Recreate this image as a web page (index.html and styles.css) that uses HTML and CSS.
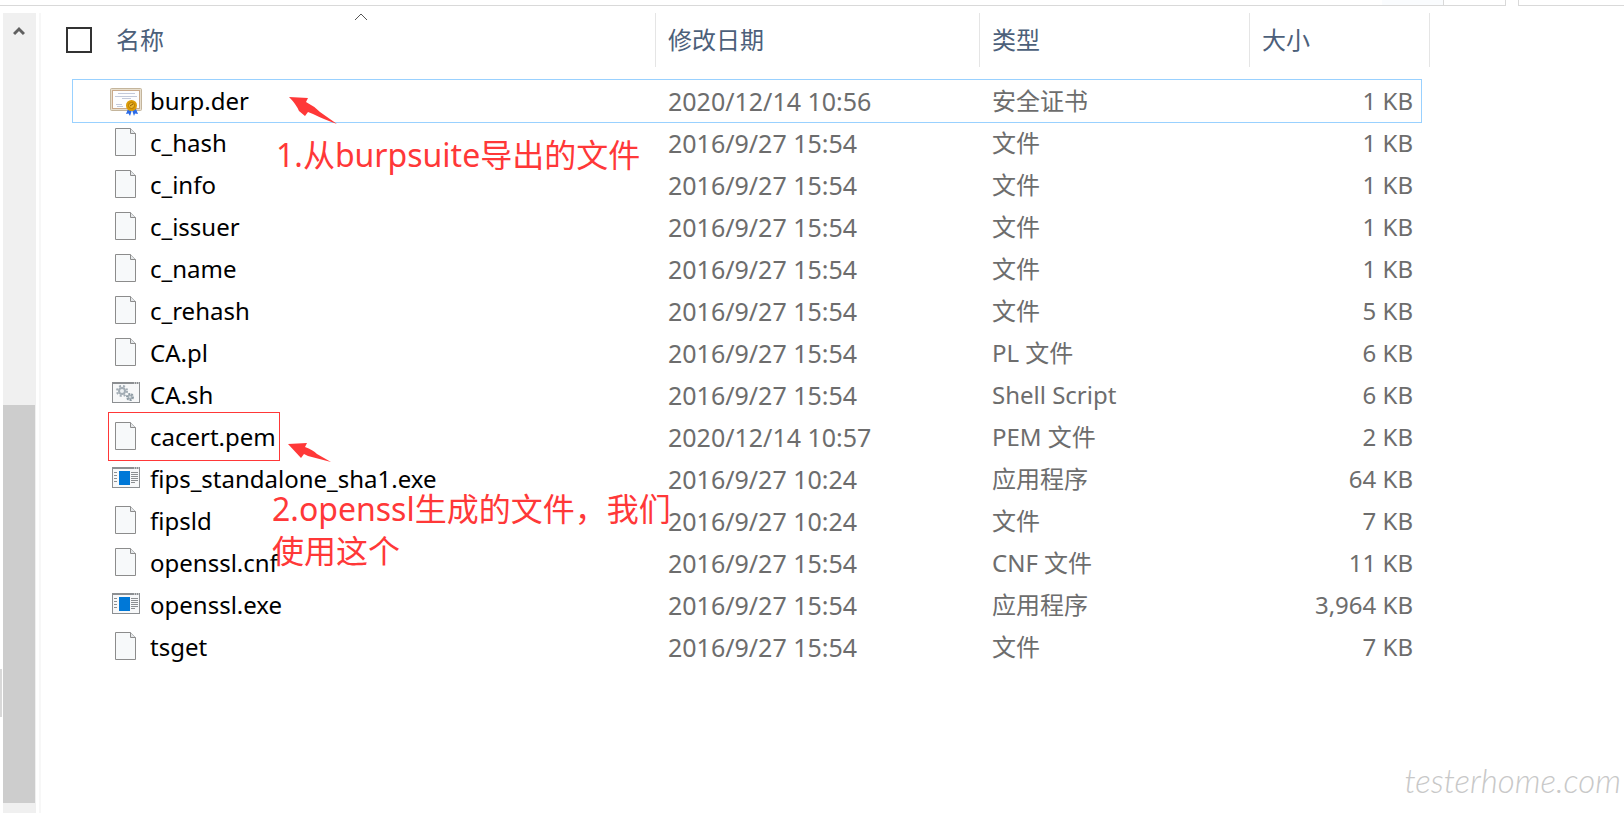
FILE: index.html
```html
<!DOCTYPE html>
<html lang="zh-CN">
    <head>
        <meta charset="utf-8">
        <title>openssl</title>
        <link rel="stylesheet" href="styles.css">
    </head>
    <body>
        <!-- icons shared by the file rows -->
        <svg class="sprite" aria-hidden="true">
            <symbol id="doc" viewBox="0 0 32 30">
                <path d="M5.500 .5h15l5 5v22h-20z" fill="#f7f9fa" stroke="#8c8c8c"/>
                <path d="M20.500 .5v5h5" fill="#e4e7e9" stroke="#8c8c8c"/>
            </symbol>
            <symbol id="cert" viewBox="0 -2 32 30">
                <rect x=".5" y=".5" width="31" height="22" rx="1" fill="#e8dfce" stroke="#c4b59c"/>
                <rect x="2.500" y="2.500" width="27" height="18" fill="#fdfdfe" stroke="#c9a98a"/>
                <path d="M8 5.500h17M5 8.500h22M12 10.500h9M6 16.500h6M7 18.500h6" stroke="#c3c9da"/>
                <path d="M18 21l-2 5 2.500-.5 1.500 2.500 2-6 2 6 1-2.500 3 .5-2-5z" fill="#2a6be8"/>
                <circle cx="21.500" cy="17.500" r="5.500" fill="#dc9c08"/>
                <circle cx="21.500" cy="17.500" r="3" fill="#e9b42c" stroke="#b57a00"/>
                <path d="M20 18l3-2" stroke="#8e5b00"/>
            </symbol>
            <symbol id="script" viewBox="0 2 32 30">
                <rect x="2.500" y="4.500" width="27" height="20" fill="#f7f8f9" stroke="#8c8f92"/>
                <path d="M2 5h28" stroke="#8c8f92" stroke-width="2"/>
                <path d="M24 5h1m1 0h1m1 0h1" stroke="#fff"/>
                <circle cx="12" cy="13" r="5" fill="none" stroke="#a3adb5" stroke-width="2" stroke-dasharray="2 2"/>
                <circle cx="12" cy="13" r="3" fill="#edf0f2" stroke="#a3adb5" stroke-width="2"/>
                <circle cx="20" cy="19" r="3" fill="none" stroke="#8d9aa3" stroke-width="2" stroke-dasharray="2 1"/>
                <circle cx="20" cy="19" r="2" fill="#cfd6da" stroke="#8d9aa3"/>
            </symbol>
            <symbol id="exe" viewBox="0 1 32 30">
                <rect x="2.500" y="4.500" width="27" height="20" fill="#f7f8f9" stroke="#8c8f92"/>
                <path d="M2 5h28" stroke="#8c8f92" stroke-width="2"/>
                <path d="M24 5h1m1 0h1m1 0h1" stroke="#fff"/>
                <path d="M4 9.500h3M4 12.500h3M4 15.500h3M4 18.500h3M21 9.500h7M21 11.500h7M21 13.500h7M21 15.500h7M21 17.500h7M21 19.500h4" stroke="#8c8f92"/>
                <rect x="9" y="8" width="11" height="14" fill="#0078d7"/>
            </symbol>
        </svg>

        <div class="toolbar">
            <div class="address"><span class="dropdown"></span></div>
            <div class="search"></div>
        </div>

        <div class="window">
            <div class="tree">
                <span class="tree-edge"></span>
                <div class="scrollbar">
                    <button class="scroll-up" aria-label="向上滚动"><svg width="12" height="10" viewBox="0 0 12 10"><path d="M1 8l5-5 5 5" fill="none" stroke="#606060" stroke-width="3"/></svg></button>
                    <div class="thumb"></div>
                </div>
            </div>

            <main class="files">
                <table>
                    <colgroup>
                        <col>
                        <col class="col-date">
                        <col class="col-type">
                        <col class="col-size">
                    </colgroup>
                    <thead>
                        <tr>
                            <th><div class="name-head"><input type="checkbox" id="all"><label for="all">名称</label></div><svg class="sort" width="14" height="8" viewBox="0 0 14 8"><path d="M1 7l6-6 6 6" fill="none" stroke="#555"/></svg></th>
                            <th>修改日期</th>
                            <th>类型</th>
                            <th>大小</th>
                        </tr>
                    </thead>
                    <tbody>
                        <tr class="focused"><td><svg class="icon"><use href="#cert"/></svg>burp.der</td><td class="date">2020/12/14 10:56</td><td>安全证书</td><td>1 KB</td></tr>
                        <tr><td><svg class="icon"><use href="#doc"/></svg>c_hash</td><td class="date">2016/9/27 15:54</td><td>文件</td><td>1 KB</td></tr>
                        <tr><td><svg class="icon"><use href="#doc"/></svg>c_info</td><td class="date">2016/9/27 15:54</td><td>文件</td><td>1 KB</td></tr>
                        <tr><td><svg class="icon"><use href="#doc"/></svg>c_issuer</td><td class="date">2016/9/27 15:54</td><td>文件</td><td>1 KB</td></tr>
                        <tr><td><svg class="icon"><use href="#doc"/></svg>c_name</td><td class="date">2016/9/27 15:54</td><td>文件</td><td>1 KB</td></tr>
                        <tr><td><svg class="icon"><use href="#doc"/></svg>c_rehash</td><td class="date">2016/9/27 15:54</td><td>文件</td><td>5 KB</td></tr>
                        <tr><td><svg class="icon"><use href="#doc"/></svg>CA.pl</td><td class="date">2016/9/27 15:54</td><td>PL 文件</td><td>6 KB</td></tr>
                        <tr><td><svg class="icon"><use href="#script"/></svg>CA.sh</td><td class="date">2016/9/27 15:54</td><td>Shell Script</td><td>6 KB</td></tr>
                        <tr><td><svg class="icon"><use href="#doc"/></svg>cacert.pem</td><td class="date">2020/12/14 10:57</td><td>PEM 文件</td><td>2 KB</td></tr>
                        <tr><td><svg class="icon"><use href="#exe"/></svg>fips_standalone_sha1.exe</td><td class="date">2016/9/27 10:24</td><td>应用程序</td><td>64 KB</td></tr>
                        <tr><td><svg class="icon"><use href="#doc"/></svg>fipsld</td><td class="date">2016/9/27 10:24</td><td>文件</td><td>7 KB</td></tr>
                        <tr><td><svg class="icon"><use href="#doc"/></svg>openssl.cnf</td><td class="date">2016/9/27 15:54</td><td>CNF 文件</td><td>11 KB</td></tr>
                        <tr><td><svg class="icon"><use href="#exe"/></svg>openssl.exe</td><td class="date">2016/9/27 15:54</td><td>应用程序</td><td>3,964 KB</td></tr>
                        <tr><td><svg class="icon"><use href="#doc"/></svg>tsget</td><td class="date">2016/9/27 15:54</td><td>文件</td><td>7 KB</td></tr>
                    </tbody>
                </table>

                <!-- notes drawn over the list -->
                <svg class="arrow arrow-one" width="50" height="28" viewBox="0 0 50 28"><path d="M0 0l19 1-2 4q8 4 14 10l17 12q-14-5-24-10l-5-2-3 4-6-5q-3-7-10-14z" fill="#ff3838"/></svg>
                <p class="note note-one">1.从burpsuite导出的文件</p>
                <div class="mark"></div>
                <svg class="arrow arrow-two" width="44" height="20" viewBox="0 0 44 20"><path d="M0 1l19-1-2 4q8 3 12 7l14 8-23-6-4-2-3 4z" fill="#ff3838"/></svg>
                <p class="note note-two">2.openssl生成的文件，我们<br>使用这个</p>
            </main>
        </div>
        <div class="watermark">testerhome.com</div>
    </body>
</html>
```
FILE: styles.css
```css
* {
    box-sizing: border-box;
}
body {
    margin: 0;
    min-height: 100vh;
    display: flex;
    flex-direction: column;
    background: white;
    color: #6d6d6d;
    font-family: "Noto Sans", "Noto Sans CJK SC", sans-serif;
    font-size: 24px;
    line-height: 42px;
}
.sprite {
    position: absolute;
    width: 0;
    height: 0;
}
.toolbar {
    display: flex;
    gap: 12px;
    height: 6px;
}
.address {
    flex: 1;
    display: flex;
    justify-content: flex-end;
    padding-right: 61px;
    border: 1px solid #d9d9d9;
    border-width: 0 1px 1px 0;
}
.dropdown {
    width: 62px;
    background: #fafcfe;
    border-right: 1px solid #d9d9d9;
}
.search {
    width: 106px;
    border: 1px solid #d9d9d9;
    border-width: 0 0 1px 1px;
}
.window {
    flex: 1;
    display: flex;
    padding-top: 7px;
}
.tree {
    display: flex;
    gap: 1px;
    width: 41px;
    border-right: 2px solid #f7f7f7;
}
.tree-edge {
    width: 2px;
    height: 48px;
    margin-top: 656px;
    background: #d9d9d9;
}
.scrollbar {
    display: grid;
    grid-template-rows: 392fr 398fr 10fr;
    width: 33px;
    padding-right: 1px;
    background: #f0f0f0;
}
.scroll-up {
    align-self: start;
    height: 36px;
    padding: 0;
    border: 0;
    background: none;
    line-height: 0;
}
.thumb {
    background: #cdcdcd;
}
.files {
    position: relative;
    flex: 1;
    padding: 0 194px 0 25px;
}
table {
    width: 100%;
    table-layout: fixed;
    border-collapse: separate;
    border-spacing: 0;
}
.col-date {
    width: 324px;
}
.col-type {
    width: 270px;
}
.col-size {
    width: 180px;
}
th {
    position: relative;
    height: 67px;
    padding: 0 12px 13px;
    color: #4c607a;
    font-weight: normal;
    text-align: left;
}
th:first-child {
    padding-left: 0;
}
/* column divider, stops short of the first row */
th::after {
    content: "";
    position: absolute;
    top: 0;
    right: 0;
    bottom: 13px;
    border-right: 1px solid #e5e5e5;
}
.name-head {
    display: flex;
    align-items: center;
    gap: 24px;
}
.name-head input {
    appearance: none;
    width: 26px;
    height: 26px;
    margin: 0;
    border: 2px solid #333;
}
.sort {
    position: absolute;
    top: 0;
    left: calc(50% - 7px);
}
td {
    height: 42px;
    padding: 0 12px;
    white-space: nowrap;
}
td:first-child {
    padding-left: 44px;
    color: black;
}
td:last-child {
    padding-right: 17px;
    text-align: right;
}
.date {
    font-size: 25px;
}
.focused {
    position: relative;
}
/* outline spans the whole row */
.focused td:first-child::after {
    content: "";
    position: absolute;
    inset: -1px 8px -1px 6px;
    border: 1px solid #99d1ff;
}
.icon {
    width: 32px;
    height: 30px;
    margin-right: 8px;
    vertical-align: -6px;
}
.arrow, .note, .mark, .watermark {
    position: absolute;
}
.note {
    margin: 0;
    color: #ff3838;
    font-size: 32px;
    white-space: nowrap;
}
.arrow-one {
    left: 248px;
    top: 84px;
}
.note-one {
    left: 235px;
    top: 121px;
}
.mark {
    left: 67px;
    top: 399px;
    width: 172px;
    height: 49px;
    border: 1px solid #ff3838;
}
.arrow-two {
    left: 247px;
    top: 430px;
}
.note-two {
    left: 231px;
    top: 475px;
}
.watermark {
    right: 3px;
    bottom: 12px;
    color: #c8c8c8;
    font-family: "Lato", sans-serif;
    font-size: 33px;
    font-style: italic;
    font-weight: 300;
}
```
